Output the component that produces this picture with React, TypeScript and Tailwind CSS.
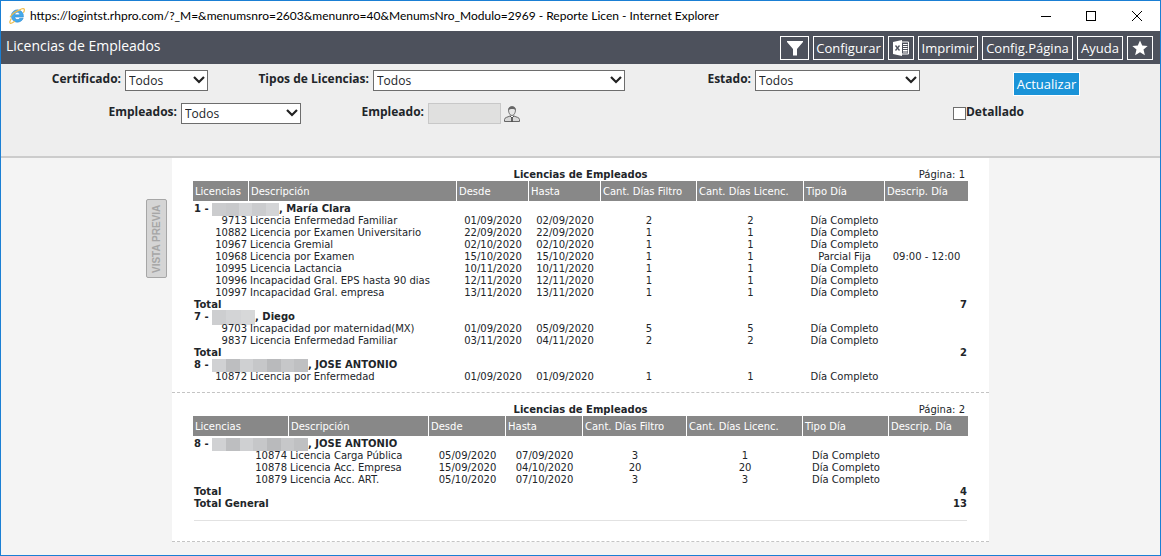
import React from 'react';
import clsx from 'clsx';

type Row =
  | { kind: 'group'; id: string; name: string; mask: { size: string; tones: string[] } }
  | { kind: 'item'; cells: string[] }
  | { kind: 'total'; label: string; value: string };

interface Page {
  number: number;
  columns: string[];
  rows: Row[];
  last?: boolean;
}

const HEADERS = [
  'Licencias',
  'Descripción',
  'Desde',
  'Hasta',
  'Cant. Días Filtro',
  'Cant. Días Licenc.',
  'Tipo Día',
  'Descrip. Día',
];

const LONG_MASK = {
  size: 'h-[13px] w-24',
  tones: ['bg-[#d0d1d3]', 'bg-[#bdbec0]', 'bg-[#cfd0d2]', 'bg-[#c6c7c9]', 'bg-[#b9babc]', 'bg-[#c6c7c9]', 'bg-[#bfc0c2]'],
};

const item = (...cells: string[]): Row => ({ kind: 'item', cells });

const PAGES: Page[] = [
  {
    number: 1,
    columns: ['w-[56px]', '', 'w-[72px]', 'w-[72px]', 'w-[96px]', 'w-[107px]', 'w-[81px]', 'w-[83px]'],
    rows: [
      {
        kind: 'group',
        id: '1',
        name: ', María Clara',
        mask: {
          size: 'h-[13px] w-[67px]',
          tones: ['bg-[#cbccce]', 'bg-[#c8c9cb]', 'bg-[#d4d5d7]', 'bg-[#cbccce]', 'bg-[#d4d5d7]'],
        },
      },
      item('9713', 'Licencia Enfermedad Familiar', '01/09/2020', '02/09/2020', '2', '2', 'Día Completo', ''),
      item('10882', 'Licencia por Examen Universitario', '22/09/2020', '22/09/2020', '1', '1', 'Día Completo', ''),
      item('10967', 'Licencia Gremial', '02/10/2020', '02/10/2020', '1', '1', 'Día Completo', ''),
      item('10968', 'Licencia por Examen', '15/10/2020', '15/10/2020', '1', '1', 'Parcial Fija', '09:00 - 12:00'),
      item('10995', 'Licencia Lactancia', '10/11/2020', '10/11/2020', '1', '1', 'Día Completo', ''),
      item('10996', 'Incapacidad Gral. EPS hasta 90 dias', '12/11/2020', '12/11/2020', '1', '1', 'Día Completo', ''),
      item('10997', 'Incapacidad Gral. empresa', '13/11/2020', '13/11/2020', '1', '1', 'Día Completo', ''),
      { kind: 'total', label: 'Total', value: '7' },
      {
        kind: 'group',
        id: '7',
        name: ', Diego',
        mask: { size: 'h-[15px] w-[43px]', tones: ['bg-[#cdced0]', 'bg-[#d3d4d6]', 'bg-[#d7d8d9]'] },
      },
      item('9703', 'Incapacidad por maternidad(MX)', '01/09/2020', '05/09/2020', '5', '5', 'Día Completo', ''),
      item('9837', 'Licencia Enfermedad Familiar', '03/11/2020', '04/11/2020', '2', '2', 'Día Completo', ''),
      { kind: 'total', label: 'Total', value: '2' },
      { kind: 'group', id: '8', name: ', JOSE ANTONIO', mask: LONG_MASK },
      item('10872', 'Licencia por Enfermedad', '01/09/2020', '01/09/2020', '1', '1', 'Día Completo', ''),
    ],
  },
  {
    number: 2,
    last: true,
    columns: ['w-[96px]', '', 'w-[77px]', 'w-[77px]', 'w-[104px]', 'w-[116px]', 'w-[86px]', 'w-[79px]'],
    rows: [
      { kind: 'group', id: '8', name: ', JOSE ANTONIO', mask: LONG_MASK },
      item('10874', 'Licencia Carga Pública', '05/09/2020', '07/09/2020', '3', '1', 'Día Completo', ''),
      item('10878', 'Licencia Acc. Empresa', '15/09/2020', '04/10/2020', '20', '20', 'Día Completo', ''),
      item('10879', 'Licencia Acc. ART.', '05/10/2020', '07/10/2020', '3', '3', 'Día Completo', ''),
      { kind: 'total', label: 'Total', value: '4' },
      { kind: 'total', label: 'Total General', value: '13' },
    ],
  },
];

const BrowserIcon = () => (
  <svg viewBox="0 0 16 16" className="h-4 w-4" aria-hidden="true">
    <path
      d="M8.3 1.800a6.200 6.200 0 1 0 5.900 8.500h-3.500a2.700 2.700 0 0 1-5-1.200h8.700A6.200 6.200 0 0 0 8.300 1.800zM5.800 6.800a2.500 2.500 0 0 1 5 0z"
      fill="#45a9ea"
      stroke="#1f7fcb"
      strokeWidth="0.5"
    />
    <path
      d="M2.300 10.500C.8 13 .3 15 1.500 15.300c1 .2 2.700-.8 4.200-2M9.500 2.400C12 .8 14.600.1 15.200 1.100c.4.700.1 2-.8 3.600M1 9.300C3 6 7 3 12 1.700"
      fill="none"
      stroke="#f2bd4a"
      strokeWidth="1.200"
    />
  </svg>
);

const WindowControls = () => (
  <div className="flex h-full items-center text-black">
    <button type="button" aria-label="Minimizar" className="flex w-[45px] justify-center">
      <svg viewBox="0 0 10 10" className="h-[10px] w-[10px]" shapeRendering="crispEdges">
        <path d="M0 5.500h10" stroke="currentColor" />
      </svg>
    </button>
    <button type="button" aria-label="Maximizar" className="flex w-[45px] justify-center">
      <svg viewBox="0 0 10 10" className="h-[10px] w-[10px]" shapeRendering="crispEdges">
        <path d="M.5.5h9v9h-9z" fill="none" stroke="currentColor" />
      </svg>
    </button>
    <button type="button" aria-label="Cerrar" className="flex w-[47px] justify-center">
      <svg viewBox="0 0 10 10" className="h-[10px] w-[10px]">
        <path d="M0 0l10 10M10 0L0 10" stroke="currentColor" />
      </svg>
    </button>
  </div>
);

const FilterIcon = () => (
  <svg viewBox="0 0 16 15" className="h-[15px] w-4" fill="#fff">
    <path d="M0 0h16v1L10 8v6.500H6V8L0 1z" />
  </svg>
);

const ExcelIcon = () => (
  <svg viewBox="0 0 16 16" className="h-4 w-4">
    <path d="M0 2l9-2v16l-9-2z" fill="#fff" />
    <path d="M9 2h6.500v12H9" fill="none" stroke="#fff" />
    <path d="M10 4.500h4.500M10 6.500h4.500M10 8.500h4.500M10 10.500h4.500M10 12h4.500" stroke="#fff" />
    <path d="M2.500 5.500l4 5M6.500 5.500l-4 5" stroke="#4d515c" strokeWidth="1.300" />
  </svg>
);

const StarIcon = () => (
  <svg viewBox="0 0 16 16" className="h-4 w-4" fill="#fff">
    <path d="M8 .5l2.200 5 5.500.5-4.200 3.600 1.400 5.700L8 12.300l-4.900 3 1.400-5.700L.3 6l5.500-.5z" />
  </svg>
);

const PersonIcon = () => (
  <svg viewBox="0 0 16 16" className="h-4 w-4">
    <path d="M.5 15.500v-2c0-2 3-2.300 5.500-3.500h4c2.500 1.200 5.500 1.500 5.500 3.500v2z" fill="#d8d8d8" stroke="#666" />
    <path d="M6 10l2 2 2-2" fill="#fff" stroke="#555" />
    <path d="M7.300 12h1.400v3.500H7.300z" fill="#333" />
    <path d="M4.500 4C4.500 1.500 6 .6 8 .6s3.500.9 3.500 3.400c0 3-1.700 5.500-3.500 5.500S4.500 7 4.500 4z" fill="#e6e6e6" stroke="#777" />
    <path d="M4.500 4C4.500 1.500 6 .6 8 .6s3.500.9 3.500 3.400c-1-1.500-5.500-1.500-7 0z" fill="#666" />
  </svg>
);

const ToolButton = ({ label, className, children }: { label?: string; className?: string; children: React.ReactNode }) => (
  <button
    type="button"
    aria-label={label}
    className={clsx('flex h-6 items-center justify-center border border-white text-[13px] leading-5', className)}
  >
    {children}
  </button>
);

const SelectField = ({ id, label, width }: { id: string; label: string; width: string }) => (
  <div className="flex justify-end gap-1">
    <label htmlFor={id} className="leading-[18px] whitespace-nowrap">
      {label}
    </label>
    <div className={clsx('relative', width)}>
      <select
        id={id}
        className="h-[21px] w-full appearance-none border border-[#6d6d6d] bg-white pl-[3px] text-xs font-normal text-[#212529]"
      >
        <option>Todos</option>
      </select>
      <svg viewBox="0 0 12 8" className="pointer-events-none absolute top-[6px] right-[3px] h-2 w-3">
        <path d="M1 1l5 5 5-5" fill="none" stroke="#222" strokeWidth="2.200" />
      </svg>
    </div>
  </div>
);

const ReportRow = ({ row }: { row: Row }) => {
  if (row.kind === 'group') {
    return (
      <tr className="font-bold">
        <td colSpan={8} className="p-0 pl-[1px]">
          <div className="flex h-3 items-center whitespace-pre">
            <span>{row.id} - </span>
            <span className={clsx('flex shrink-0', row.mask.size)}>
              {row.mask.tones.map((tone, i) => (
                <span key={i} className={clsx('flex-1', tone)} />
              ))}
            </span>
            <span>{row.name}</span>
          </div>
        </td>
      </tr>
    );
  }
  if (row.kind === 'total') {
    return (
      <tr className="font-bold">
        <td colSpan={7} className="p-0 pl-[1px]">{row.label}</td>
        <td className="p-0 pr-[1px] text-right">{row.value}</td>
      </tr>
    );
  }
  return (
    <tr>
      {row.cells.map((cell, i) => (
        <td
          key={i}
          className={clsx('p-0 whitespace-nowrap', i === 0 ? 'pr-[2px] text-right' : i === 1 ? 'pl-[1px]' : 'text-center')}
        >
          {cell}
        </td>
      ))}
    </tr>
  );
};

const ReportPage = ({ page }: { page: Page }) => (
  <section className="border-b border-dashed border-[#c4c4c4] bg-white px-[21px] pt-[10px]">
    <div className="grid grid-cols-3 leading-[13px]">
      <h2 className="col-start-2 text-center font-bold">Licencias de Empleados</h2>
      <span className="pr-[3px] text-right">Página: {page.number}</span>
    </div>
    <table className="w-full table-fixed border-separate border-spacing-0 leading-3">
      <colgroup>
        {page.columns.map((width, i) => (
          <col key={i} className={width} />
        ))}
      </colgroup>
      <thead>
        <tr className="h-5 bg-[#888] text-left text-white">
          {HEADERS.map((title) => (
            <th key={title} className="border-r border-white p-0 pt-[2px] pl-[2px] font-normal whitespace-nowrap last:border-r-0">
              {title}
            </th>
          ))}
        </tr>
      </thead>
      <tbody className="before:block before:h-[2px]">
        {page.rows.map((row, i) => (
          <ReportRow key={i} row={row} />
        ))}
      </tbody>
    </table>
    {page.last ? <hr className="mx-px mt-[10px] mb-5 border-[#e2e2e2]" /> : <div className="h-[9px]" />}
  </section>
);

export default function App() {
  return (
    <div className="flex min-h-screen flex-col border border-[#1a7fd4] bg-[#f4f4f4] font-['Open_Sans','Noto_Sans',sans-serif] text-[#212529]">
      <div className="flex h-[30px] items-center bg-white pl-2">
        <BrowserIcon />
        <span className="ml-[5px] flex-1 font-['Segoe_UI','Lato',sans-serif] text-xs whitespace-nowrap text-black">
          https://logintst.rhpro.com/?_M=&amp;menumsnro=2603&amp;menunro=40&amp;MenumsNro_Modulo=2969 - Reporte Licen - Internet Explorer
        </span>
        <WindowControls />
      </div>

      <header className="flex h-[33px] justify-between bg-[#4d515c] pt-[5px] pr-[7px] pl-[5px] text-white">
        <h1 className="text-sm leading-5">Licencias de Empleados</h1>
        <div className="flex gap-1">
          <ToolButton label="Filtro" className="w-[29px]"><FilterIcon /></ToolButton>
          <ToolButton className="w-[71px]">Configurar</ToolButton>
          <ToolButton label="Excel" className="w-[26px]"><ExcelIcon /></ToolButton>
          <ToolButton className="w-[60px]">Imprimir</ToolButton>
          <ToolButton className="w-[91px]">Config.Página</ToolButton>
          <ToolButton className="w-[46px]">Ayuda</ToolButton>
          <ToolButton label="Favorito" className="w-[26px]"><StarIcon /></ToolButton>
        </div>
      </header>

      <form className="flex h-[94px] flex-col gap-3 border-b-2 border-[#ccc] bg-[#eee] pt-[6px] text-xs font-bold">
        <div className="grid grid-cols-[207fr_417fr_295fr_160fr_80fr]">
          <SelectField id="certificado" label="Certificado:" width="w-[83px]" />
          <SelectField id="tipos" label="Tipos de Licencias:" width="w-[252px]" />
          <SelectField id="estado" label="Estado:" width="w-[165px]" />
          <div className="flex h-[21px] justify-end pt-[2px]">
            <button type="button" className="h-6 w-[67px] shrink-0 border border-white bg-[#1a93d8] text-[13px] leading-5 font-normal text-white">
              Actualizar
            </button>
          </div>
        </div>
        <div className="grid grid-cols-[300fr_219fr_504fr_136fr]">
          <SelectField id="empleados" label="Empleados:" width="w-[120px]" />
          <div className="flex justify-end">
            <label htmlFor="empleado" className="mr-1 leading-[18px]">Empleado:</label>
            <input id="empleado" type="text" disabled className="h-[21px] w-[73px] border border-[#c8c8c8] bg-[#e0e0df]" />
            <button type="button" aria-label="Buscar empleado" className="ml-[3px] h-4 self-center">
              <PersonIcon />
            </button>
          </div>
          <div className="flex justify-end">
            <input
              id="detallado"
              type="checkbox"
              className="mt-1 h-[13px] w-[13px] appearance-none border border-[#6d6d6d] bg-white checked:bg-[#6d6d6d]"
            />
            <label htmlFor="detallado" className="leading-[18px]">Detallado</label>
          </div>
        </div>
      </form>

      <main className="flex flex-1 items-start">
        <div className="flex flex-1 justify-end pt-[41px]">
          <button
            type="button"
            className="mr-[5px] h-[79px] w-[21px] rotate-180 rounded-xs border border-[#a6a6a6] bg-[#d5d5d5] font-['Liberation_Sans',Arial,sans-serif] text-[10px] leading-[19px] font-bold text-[#a6a6a6] [writing-mode:vertical-rl]"
          >
            VISTA PREVIA
          </button>
        </div>
        <div className="w-full max-w-[817px] font-['Verdana','DejaVu_Sans',sans-serif] text-[10px]">
          {PAGES.map((page) => (
            <ReportPage key={page.number} page={page} />
          ))}
        </div>
        <div className="flex-1" />
      </main>
    </div>
  );
}
